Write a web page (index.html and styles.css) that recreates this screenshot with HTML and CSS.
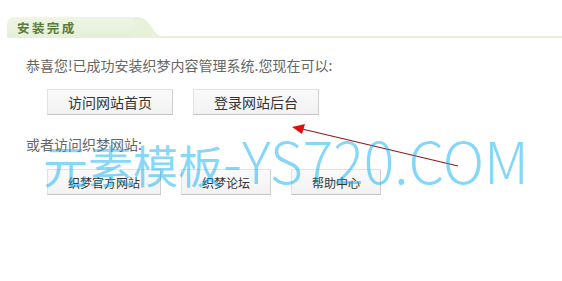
FILE: index.html
```html
<!DOCTYPE html>
<html lang="zh-CN">
<head>
<meta charset="utf-8">
<title>安装完成</title>
<link rel="stylesheet" href="styles.css">
</head>
<body>
<div class="page">
  <div class="head">
    <div class="tab"><span class="tab-title">安装完成</span></div>
    <svg class="tab-curve" width="30" height="21" viewBox="0 0 30 21"><path d="M0 0 L4 0 C12 0 14 4 20 12 C24 18 26 19 30 19 L30 21 L0 21 Z" fill="#e8f2db"/></svg>
    <div class="head-line"></div>
  </div>
  <div class="content">
    <p class="msg">恭喜您!已成功安装织梦内容管理系统.您现在可以:</p>
    <div class="btn-row row-main">
      <a class="btn btn-lg">访问网站首页</a>
      <a class="btn btn-lg">登录网站后台</a>
    </div>
    <p class="msg msg-2">或者访问织梦网站:</p>
    <div class="btn-row row-sub">
      <a class="btn btn-sm">织梦官方网站</a>
      <a class="btn btn-sm">织梦论坛</a>
      <a class="btn btn-sm">帮助中心</a>
    </div>
  </div>
  <svg class="arrow" width="562" height="281" viewBox="0 0 562 281">
    <line x1="458" y1="166" x2="298" y2="128" stroke="#8e1b1b" stroke-width="1.2"/>
    <polygon points="292,127 305,124 302,134" fill="#e40d0d"/>
  </svg>
  <div class="watermark"><span class="wm-cn">元素模板</span><span class="wm-en">-YS720.COM</span></div>
</div>
</body>
</html>
```
FILE: styles.css
```css
* { box-sizing: border-box; }
html, body { margin: 0; padding: 0; background: #fff; }
body {
  font-family: "Noto Sans CJK SC", "Noto Sans", sans-serif;
  width: 562px;
  height: 281px;
  overflow: hidden;
}
.page { position: relative; width: 562px; height: 281px; padding-top: 17px; }
.head { display: flex; align-items: flex-end; height: 21px; margin-left: 7px; }
.tab {
  width: 126px;
  height: 21px;
  background: linear-gradient(#edf5e3, #e6f0d8);
  border-radius: 7px 0 0 0;
  display: flex;
  align-items: center;
  padding-left: 10px;
}
.tab-title {
  font-size: 12.5px;
  font-weight: bold;
  color: #5c7a37;
  letter-spacing: 2.4px;
  line-height: 1;
  padding-top: 1px;
}
.tab-curve { display: block; flex: none; }
.head-line { flex: 1; height: 2px; background: #e6f0d9; }
.content { padding-left: 26px; }
.msg {
  margin: 17px 0 0;
  font-size: 14px;
  line-height: 20px;
  color: #666;
}
.btn-row { display: flex; margin-left: 21px; }
.row-main { margin-top: 14px; gap: 20px; }
.row-sub { margin-top: 15px; gap: 20px; }
.msg-2 { margin-top: 19px; }
.btn {
  display: flex;
  align-items: center;
  justify-content: center;
  background: linear-gradient(#fafafa, #f2f2f2);
  border: 1px solid #e2e2e2;
  border-right-color: #cfcfcf;
  border-bottom-color: #c4c4c4;
  color: #333;
  text-decoration: none;
}
.btn-lg { width: 126px; height: 26px; font-size: 14px; }
.btn-sm { height: 26px; font-size: 12px; padding: 0 20px; }
.arrow { position: absolute; left: 0; top: 0; pointer-events: none; }
.watermark {
  position: absolute;
  left: 43px;
  top: 131px;
  white-space: nowrap;
  color: rgba(0, 172, 242, 0.48);
  line-height: 1;
  pointer-events: none;
}
.wm-cn { font-family: "Noto Sans CJK SC", sans-serif; font-size: 45px; }
.wm-en { font-family: "Noto Sans CJK SC", sans-serif; font-size: 57px; font-weight: 300; }
```
